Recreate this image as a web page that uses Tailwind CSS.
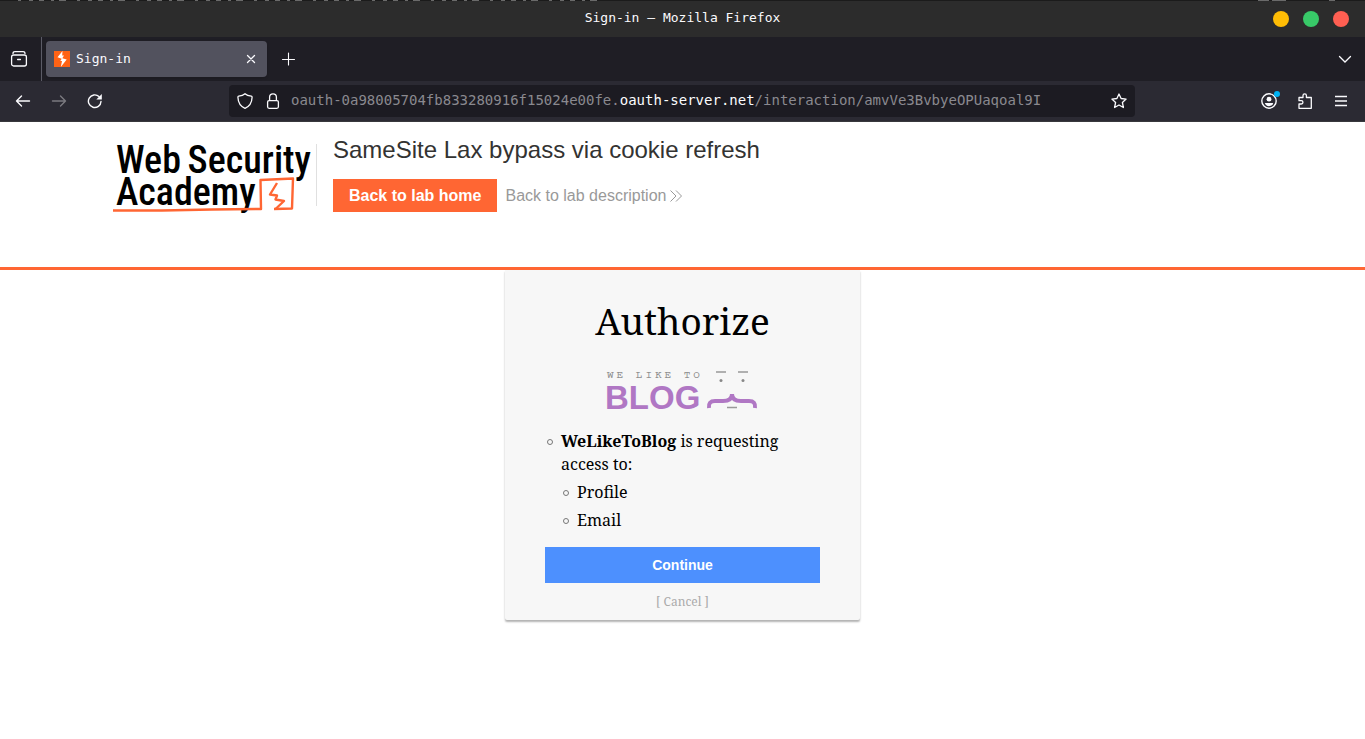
<!DOCTYPE html>
<html lang="en">
<head>
<meta charset="utf-8">
<meta name="viewport" content="width=device-width, initial-scale=1">
<title>Sign-in</title>
<script src="https://cdn.jsdelivr.net/npm/@tailwindcss/browser@4"></script>
</head>
<body class="min-h-screen bg-white flex flex-col">

<!-- Browser window -->
<div class="font-['DejaVu_Sans_Mono',monospace] text-[#fbfbfe]">
  <div class="h-px bg-[#1b1b1b]">
    <svg class="block h-px w-full" aria-hidden="true"><path d="M18 .5H605" stroke="#6a6a6a" stroke-width="1" stroke-dasharray="3 8 4 6 5 7 3 5 7 11"/><path d="M1258 .5h11m3 0h14m43 0h6" stroke="#6a6a6a"/></svg>
  </div>
  <div class="grid h-9 grid-cols-[1fr_auto_1fr] items-center bg-[#2c2c2c] px-4">
    <div></div>
    <div class="pb-0.5 text-[13px] leading-5">Sign-in — Mozilla Firefox</div>
    <div class="flex justify-end gap-3.5">
      <button class="size-4 rounded-full bg-[#ffbd05]" aria-label="Minimize"></button>
      <button class="size-4 rounded-full bg-[#38c968]" aria-label="Maximize"></button>
      <button class="size-4 rounded-full bg-[#ff5f52]" aria-label="Close"></button>
    </div>
  </div>

  <!-- Tab strip -->
  <div class="flex h-11 items-center bg-[#1f1e25]">
    <button class="flex h-11 w-[42px] items-center border-r border-[#5b5b66] pl-2.5" aria-label="View recent browsing">
      <svg class="size-[18px]" viewBox="0 0 18 18" fill="none" stroke="currentColor" stroke-width="1.3" stroke-linecap="round"><path d="M3 3.4Q3 1.600 5 1.600h8q2 0 2 1.800"/><rect x="1.6" y="5" width="14.8" height="11" rx="2"/><path d="M7.6 9.5h2.8"/></svg>
    </button>
    <div class="ml-1 flex h-9 w-[221px] items-center rounded bg-[#52525e] pl-2 pr-2 shadow">
      <svg class="size-4" viewBox="0 0 16 16"><path fill="#ff6315" d="M0 0h16v16H0z"/><path fill="#fff" d="M8.5 0 3.5 6.3 7.7 7.8 6.3 10H8L6.8 16 12.7 8.6 8.3 7.3 10 4.6H8.2z"/></svg>
      <span class="ml-1.5 flex-1 text-[13px] leading-5">Sign-in</span>
      <button class="flex size-4 items-center justify-center" aria-label="Close tab"><svg class="size-2.5" viewBox="0 0 10 10" stroke="currentColor" stroke-width="1.3" stroke-linecap="round"><path d="M1.5 1.5l7 7m0-7l-7 7"/></svg></button>
    </div>
    <button class="ml-3.5 flex size-4 items-center justify-center" aria-label="New tab"><svg class="size-3.5" viewBox="0 0 14 14" stroke="currentColor" stroke-width="1.1" stroke-linecap="round"><path d="M6.5 1v12M.5 7.500h12"/></svg></button>
    <button class="ml-auto mr-3 flex size-4 items-center justify-center" aria-label="List all tabs"><svg class="size-4" viewBox="0 0 16 16" fill="none" stroke="currentColor" stroke-width="1.3" stroke-linecap="round"><path d="M2.5 5.5 8 11l5.5-5.5"/></svg></button>
  </div>

  <!-- Navigation toolbar -->
  <div class="flex h-[41px] items-center border-b border-[#38383d] bg-[#2b2a33] pr-4 pl-[15px]">
    <button aria-label="Back"><svg class="size-4" viewBox="0 0 16 16" fill="none" stroke="currentColor" stroke-width="1.4" stroke-linecap="round" stroke-linejoin="round"><path d="M14.5 8h-13M6.5 3l-5 5 5 5"/></svg></button>
    <button class="ml-5 text-[#7b7a80]" disabled aria-label="Forward"><svg class="size-4" viewBox="0 0 16 16" fill="none" stroke="currentColor" stroke-width="1.4" stroke-linecap="round" stroke-linejoin="round"><path d="M1.5 8h13M9.5 3l5 5-5 5"/></svg></button>
    <button class="ml-5" aria-label="Reload"><svg class="size-4" viewBox="0 0 16 16" fill="none" stroke="currentColor" stroke-width="1.4" stroke-linecap="round"><path d="M14 8.5A6.3 6.3 0 1 1 12 3.6"/><path d="M14.8 1v5.5H9.3z" fill="currentColor" stroke="none"/></svg></button>
    <div class="ml-[126px] flex h-8 min-w-0 flex-1 items-center rounded bg-[#1c1b22] px-2">
      <svg class="size-4 shrink-0" viewBox="0 0 16 16" fill="none" stroke="currentColor" stroke-width="1.3" stroke-linejoin="round"><path d="M8 .8C6.5 2.2 4 3 1.7 3.2 1 3.3.9 3.7.9 4.3 1.1 9 3.5 13.5 8 15.3c4.5-1.8 6.9-6.3 7.1-11 0-.6-.1-1-.8-1.1C12 3 9.5 2.2 8 .8z"/></svg>
      <svg class="ml-3 size-4 shrink-0" viewBox="0 0 16 16" fill="none" stroke="currentColor" stroke-width="1.3"><rect x="2.6" y="7.6" width="10.8" height="7.7" rx="1.5"/><path d="M4.6 7.6V4.2a3.4 3.4 0 0 1 6.8 0v3.4"/></svg>
      <div class="ml-2.5 min-w-0 flex-1 overflow-hidden pb-0.5 text-sm whitespace-nowrap text-[#8a898f]" role="textbox" aria-label="Address">oauth-0a98005704fb833280916f15024e00fe.<span class="text-[#fbfbfe]">oauth-server.net</span>/interaction/amvVe3BvbyeOPUaqoal9I</div>
      <button aria-label="Bookmark this page"><svg class="size-4" viewBox="0 0 16 16" fill="none" stroke="currentColor" stroke-width="1.3" stroke-linejoin="round"><path d="M8 1l2.1 4.5 5 .6-3.7 3.4 1 5L8 12l-4.4 2.5 1-5L.9 6.100l5-.6z"/></svg></button>
    </div>
    <div class="ml-[126px] flex items-center gap-5">
      <button aria-label="Account"><svg class="block size-4 overflow-visible" viewBox="0 0 16 16" fill="none" stroke="currentColor"><circle cx="8" cy="8" r="7.2" stroke-width="1.4"/><circle cx="8" cy="6.2" r="2.4" fill="currentColor" stroke="none"/><path d="M3.8 10h8.4c-.5 2-2.2 3.2-4.2 3.2S4.3 12 3.8 10z" fill="currentColor" stroke="none"/><circle cx="16" cy="1" r="3" fill="#00b3f4" stroke="none"/></svg></button>
      <button aria-label="Extensions"><svg class="block size-4" viewBox="0 0 16 16" fill="none" stroke="currentColor" stroke-width="1.3" stroke-linejoin="round"><path d="M2 15.3V11h2.3a1.6 1.6 0 0 0 0-3.3H2V4.5h4V2.6a1.7 1.7 0 0 1 3.4 0v1.9h4.9v10.8z"/></svg></button>
      <button aria-label="Menu"><svg class="block size-4" viewBox="0 0 16 16" stroke="currentColor" stroke-width="1.3"><path d="M2 3.5h12M2 8h12M2 12.5h12"/></svg></button>
    </div>
  </div>
</div>

<!-- Lab banner -->
<header class="h-[148px] border-b-3 border-[#ff6633] font-['Liberation_Sans',Arial,sans-serif]">
  <div class="mx-auto flex max-w-[1141px] items-start pt-3">
    <a href="#" aria-label="Web Security Academy" class="mt-2.5 h-[62px] w-[205px] shrink-0 border-r border-[#e0e0e0]">
      <svg class="block h-[72px] w-[205px] overflow-visible" viewBox="0 0 205 72">
        <g font-family="'Roboto Condensed', Roboto, sans-serif" font-weight="500" font-size="38" fill="#000"><text x="4" y="29">Web</text><text x="199" y="29" text-anchor="end">Security</text><text x="4" y="61">Academy</text></g>
        <g fill="none" stroke="#ff6633" stroke-linejoin="round"><path d="M1 66.5 50 66.5 100 65.5 149 65 148.5 36 181 34.5 180 64.5 162 65" stroke-width="2.4"/><path d="M165 39 158 50.500 165 51.500 163.500 55.500 172 57 163.500 65" stroke-width="2.4"/></g>
      </svg>
    </a>
    <div class="ml-4">
      <h1 class="text-2xl leading-8 text-[#333332]">SameSite Lax bypass via cookie refresh</h1>
      <div class="mt-[13px] flex items-center gap-2">
        <a href="#" class="bg-[#ff6633] px-4 text-base leading-[33px] font-bold text-white">Back to lab home</a>
        <a href="#" class="flex items-center gap-1 text-base text-[#999]">Back to lab description
          <svg class="h-3 w-3" viewBox="0 0 12 12" fill="none" stroke="currentColor"><path d="M.5.5 6 6 .5 11.5M6 .5 11.5 6 6 11.5"/></svg>
        </a>
      </div>
    </div>
  </div>
</header>

<!-- Consent card -->
<main class="mx-auto w-[355px] rounded-b-[2px] bg-[#f7f7f7] px-10 pt-[26px] pb-[9px] font-['Noto_Serif','DejaVu_Serif',serif] shadow-[0_2px_2px_rgba(0,0,0,0.3)]">
  <h2 class="text-center text-[37px] leading-[50px] text-black">Authorize</h2>
  <svg class="mx-auto mt-5 block h-[44px] w-[152px] overflow-visible" viewBox="0 0 152 44" role="img" aria-label="We like to blog">
    <text x="0" y="12" class="tracking-[3px]" font-family="'Courier Prime', 'Liberation Mono', monospace" font-size="11" fill="#8f8f8f">WE LIKE TO</text>
    <text x="-2" y="43" font-family="Liberation Sans, sans-serif" font-weight="700" font-size="33" fill="#b077c4">BLOG</text>
    <path d="M109 6h10M131 6h10M120 41.500h10" stroke="#999" stroke-width="1.6"/>
    <circle cx="114" cy="14.500" r="1.5" fill="#888"/><circle cx="136" cy="14.500" r="1.5" fill="#888"/>
    <path d="M102 42q-1-7 6-7h8q9 0 9-7 0 7 9 7h8q7 0 6 7" fill="none" stroke="#b077c4" stroke-width="4"/>
  </svg>
  <ul class="mt-5 text-base leading-[23px] text-black">
    <li class="flex gap-2 pl-0.5 before:mt-[9px] before:size-1.5 before:shrink-0 before:rounded-full before:border before:border-[#777] before:content-['']">
      <div><strong>WeLikeToBlog</strong> is requesting access to:
        <ul class="mt-[5px] space-y-[5px]">
          <li class="flex gap-2 pl-0.5 before:mt-[9px] before:size-1.5 before:shrink-0 before:rounded-full before:border before:border-[#777] before:content-['']">Profile</li>
          <li class="flex gap-2 pl-0.5 before:mt-[9px] before:size-1.5 before:shrink-0 before:rounded-full before:border before:border-[#777] before:content-['']">Email</li>
        </ul>
      </div>
    </li>
  </ul>
  <form onsubmit="return false">
    <button class="mt-[15px] block h-9 w-full bg-[#4d90fe] font-['Liberation_Sans',Arial,sans-serif] text-sm font-bold text-white">Continue</button>
  </form>
  <div class="mt-2.5 text-center text-xs leading-[18px] text-[#aaa]"><a href="#">[ Cancel ]</a></div>
</main>
</body>
</html>
